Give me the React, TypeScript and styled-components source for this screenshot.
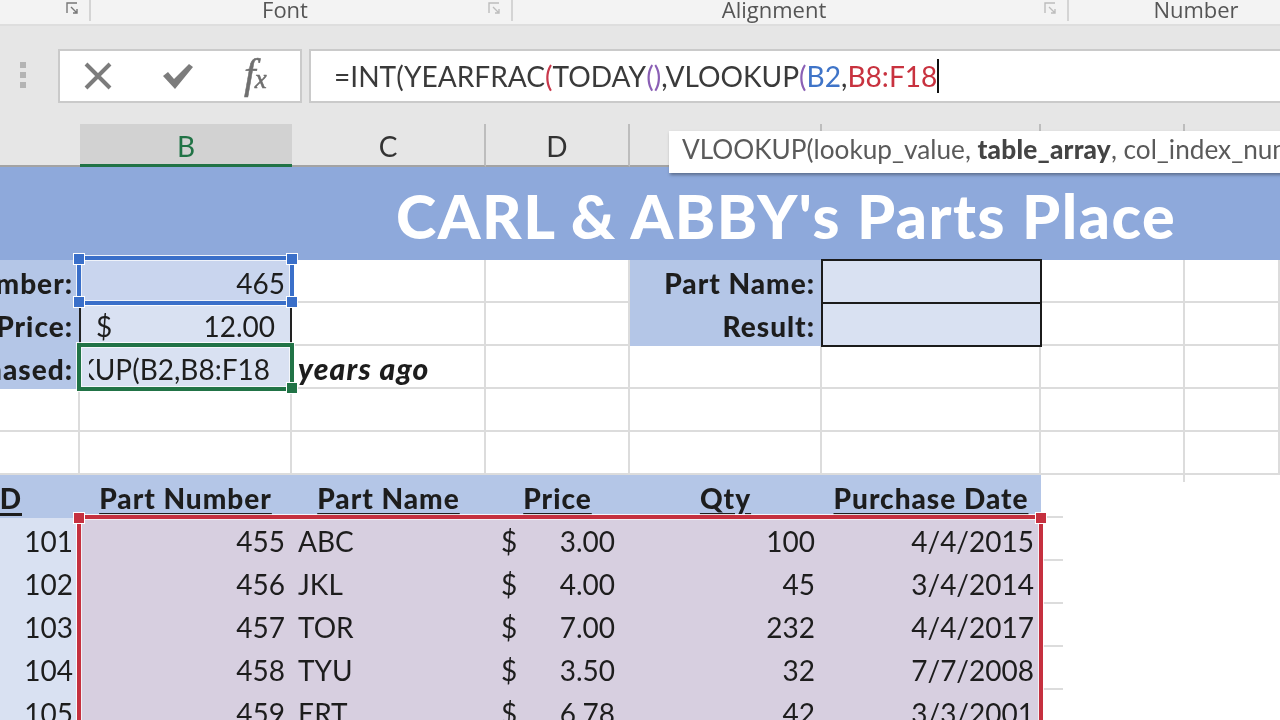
import React from "react";
import styled, { createGlobalStyle } from "styled-components";

const Global = createGlobalStyle`
  html, body { margin: 0; padding: 0; background: #fff; }
  body { font-family: Lato, "Liberation Sans", sans-serif; }
`;

const Page = styled.div`
  position: relative;
  width: 1280px;
  height: 720px;
  overflow: hidden;
  background: #fff;
  color: #1d1d1d;
  filter: blur(0.35px);
`;

/* ---------- ribbon ---------- */
const Ribbon = styled.div`
  display: grid;
  grid-template-columns: 91px 422px 556px 262px;
  height: 26px;
  box-sizing: border-box;
  background: #f3f3f3;
  border-bottom: 2px solid #dedede;
`;
const Group = styled.div<{ $edge?: boolean }>`
  display: flex;
  align-items: flex-start;
  height: 21px;
  border-right: ${(p) => (p.$edge ? "none" : "2px solid #d4d4d4")};
`;
const GroupLabel = styled.div`
  flex: 1;
  margin-top: -5px;
  padding-right: 8px;
  text-align: center;
  font-family: "Open Sans", sans-serif;
  font-size: 22px;
  line-height: 28px;
  color: #555;
`;
const Launcher = styled.svg<{ $dim?: boolean }>`
  width: 14px;
  height: 14px;
  margin: 1px 10px 0 0;
  flex: none;
  stroke: ${(p) => (p.$dim ? "#bdbdbd" : "#777")};
  fill: none;
`;

/* ---------- formula bar ---------- */
const FormulaBar = styled.div`
  display: flex;
  align-items: center;
  gap: 7px;
  height: 98px;
  box-sizing: border-box;
  padding: 2px 0 0 58px;
  background: #e6e6e6;
`;
const Grip = styled.div`
  position: absolute;
  left: 20px;
  top: 62px;
  display: flex;
  flex-direction: column;
  gap: 4px;
`;
const GripDot = styled.span`
  display: block;
  width: 6px;
  height: 6px;
  background: #b4b4b4;
`;
const ButtonBox = styled.div`
  display: flex;
  align-items: center;
  width: 244px;
  height: 54px;
  box-sizing: border-box;
  background: #fff;
  border: 2px solid #cacaca;
  padding-left: 23px;
  gap: 50px;
`;
const ActionIcon = styled.svg`
  flex: none;
  width: 30px;
  height: 30px;
`;
const FxText = styled.span`
  margin-left: 1px;
  font-family: "Liberation Serif", serif;
  font-style: italic;
  font-size: 42px;
  line-height: 40px;
  color: #6f6f6f;
  letter-spacing: -1px;
  -webkit-text-stroke: 0.5px #6f6f6f;
`;
const FxSmall = styled.span`
  font-size: 27px;
`;
const FormulaInput = styled.div`
  flex: 1;
  display: flex;
  align-items: center;
  height: 54px;
  box-sizing: border-box;
  background: #fff;
  border: 2px solid #cacaca;
  border-right: none;
  padding-left: 23px;
  font-size: 28.1px;
  color: #3a3a3a;
  white-space: nowrap;
`;
const Ref = styled.span<{ $c: string }>`
  color: ${(p) => p.$c};
`;
const Caret = styled.span`
  display: inline-block;
  width: 2px;
  height: 34px;
  background: #111;
`;

/* ---------- column headers ---------- */
const Columns = "80px 212px 194px 144px 192px 219px 144px 95px";
const HeaderRow = styled.div`
  display: grid;
  grid-template-columns: ${Columns};
  height: 43px;
  background: #e6e6e6;
`;
const ColHead = styled.div<{ $active?: boolean; $line?: boolean }>`
  display: flex;
  align-items: center;
  justify-content: center;
  box-sizing: border-box;
  padding-top: 3px;
  font-size: 28px;
  color: ${(p) => (p.$active ? "#217346" : "#333")};
  background: ${(p) => (p.$active ? "#d2d2d2" : "transparent")};
  border-bottom: ${(p) => (p.$active ? "3px solid #217346" : "2px solid #a3a3a3")};
  border-right: ${(p) => (p.$line ? "2px solid #bdbdbd" : "none")};
`;
const Tooltip = styled.div`
  position: absolute;
  left: 669px;
  top: 131px;
  width: 640px;
  height: 42px;
  box-sizing: border-box;
  padding: 0 0 6px 13px;
  display: flex;
  align-items: center;
  background: #fff;
  box-shadow: 1px 2px 3px rgba(0, 0, 0, 0.35);
  font-size: 26.2px;
  color: #5a5a5a;
  white-space: nowrap;
  overflow: hidden;
  z-index: 5;
`;
const TipBold = styled.b`
  color: #444;
  font-weight: 900;
  letter-spacing: 0.2px;
`;

/* ---------- sheet ---------- */
const Sheet = styled.div`
  position: relative;
  display: grid;
  grid-template-columns: ${Columns};
  grid-template-rows: 93px repeat(11, 43px);
`;
const Title = styled.div`
  grid-column: 1 / -1;
  display: flex;
  align-items: center;
  padding: 3px 0 0 396px;
  background: #8ea9db;
  color: #fff;
  font-weight: 900;
  font-size: 61px;
  letter-spacing: 1.5px;
  white-space: nowrap;
`;
type CellProps = {
  $fill?: string;
  $align?: "left" | "right" | "center" | "split";
  $bold?: boolean;
  $grid?: boolean;
  $box?: boolean;
  $tick?: boolean;
  $stub?: boolean;
  $sides?: boolean;
};
const justify = { left: "flex-start", right: "flex-end", center: "center", split: "space-between" };
const Cell = styled.div<CellProps>`
  display: flex;
  align-items: center;
  justify-content: ${(p) => justify[p.$align ?? "left"]};
  box-sizing: border-box;
  min-width: 0;
  overflow: hidden;
  white-space: nowrap;
  padding: ${(p) => (p.$align === "split" ? "2px 15px 0 15px" : "2px 7px 0 6px")};
  font-size: 28px;
  font-weight: ${(p) => (p.$bold ? 900 : 400)};
  letter-spacing: ${(p) => (p.$bold ? "1px" : "0")};
  color: #1d1d1d;
  background-color: ${(p) => p.$fill ?? "transparent"};
  ${(p) => p.$grid && "border-right: 2px solid #dcdcdc; border-bottom: 2px solid #dcdcdc;"}
  ${(p) => p.$box && "outline: 2px solid #1b1b1b; outline-offset: -1px; position: relative;"}
  ${(p) => p.$sides && "margin-left: -1px; border-left: 2px solid #222; border-right: 2px solid #222;"}
  ${(p) =>
    p.$tick &&
    "background-image: linear-gradient(#dcdcdc, #dcdcdc); background-repeat: no-repeat; background-size: 22px 2px; background-position: left bottom;"}
  ${(p) =>
    p.$stub &&
    "background-image: linear-gradient(#dcdcdc, #dcdcdc), linear-gradient(#dcdcdc, #dcdcdc); background-repeat: no-repeat; background-size: 22px 2px, 2px 7px; background-position: left bottom, right top;"}
`;
const HeadCell = styled(Cell)`
  font-weight: 900;
  letter-spacing: 1px;
  text-decoration: underline;
  text-decoration-thickness: 3px;
  text-underline-offset: 4px;
  background-color: #b4c6e7;
`;
const IdLabel = styled.span`
  margin-right: 51px;
`;
const EditClip = styled.div`
  display: flex;
  justify-content: flex-end;
  width: 100%;
  margin: 0 15px 0 3px;
  overflow: hidden;
`;
const YearsAgo = styled.span`
  font-weight: 900;
  font-style: italic;
  font-size: 30px;
  letter-spacing: 1.2px;
`;

/* overlays */
const Range = styled.div<{ $c: string; $l: number; $t: number; $w: number; $h: number; $open?: boolean }>`
  position: absolute;
  left: ${(p) => p.$l}px;
  top: ${(p) => p.$t}px;
  width: ${(p) => p.$w}px;
  height: ${(p) => p.$h}px;
  box-sizing: border-box;
  border: 4px solid ${(p) => p.$c};
  ${(p) => p.$open && "border-bottom: none;"}
  box-shadow: 0 0 0 1px rgba(255, 255, 255, 0.85), inset 0 0 0 1px rgba(255, 255, 255, 0.7);
  pointer-events: none;
  z-index: 3;
`;
const Handle = styled.span<{ $c: string; $x: "l" | "r"; $y: "t" | "b" }>`
  position: absolute;
  width: 12px;
  height: 12px;
  box-sizing: border-box;
  background: ${(p) => p.$c};
  border: 1px solid #fff;
  ${(p) => (p.$x === "l" ? "left: -8px;" : "right: -8px;")}
  ${(p) => (p.$y === "t" ? "top: -7px;" : "bottom: -7px;")}
`;

const rows = [
  ["101", "455", "ABC", "3.00", "100", "4/4/2015"],
  ["102", "456", "JKL", "4.00", "45", "3/4/2014"],
  ["103", "457", "TOR", "7.00", "232", "4/4/2017"],
  ["104", "458", "TYU", "3.50", "32", "7/7/2008"],
  ["105", "459", "ERT", "6.78", "42", "3/3/2001"],
];

const LABEL = "#b4c6e7";
const LIGHT = "#d9e1f2";
const PICK = "#d7cfe0";

const LauncherIcon = ({ dim }: { dim?: boolean }) => (
  <Launcher $dim={dim} viewBox="0 0 14 14" strokeWidth="1.4">
    <path d="M12 2H2v10" />
    <path d="M6 6l6 6M12 8v4H8" />
  </Launcher>
);

export default function App() {
  return (
    <Page>
      <Global />
      <Ribbon>
        <Group>
          <GroupLabel />
          <LauncherIcon />
        </Group>
        <Group>
          <GroupLabel>Font</GroupLabel>
          <LauncherIcon dim />
        </Group>
        <Group>
          <GroupLabel>Alignment</GroupLabel>
          <LauncherIcon dim />
        </Group>
        <Group $edge>
          <GroupLabel>Number</GroupLabel>
        </Group>
      </Ribbon>

      <FormulaBar>
        <Grip>
          <GripDot />
          <GripDot />
          <GripDot />
        </Grip>
        <ButtonBox>
          <ActionIcon viewBox="0 0 30 30">
            <path d="M3 3l24 24M27 3L3 27" stroke="#7c7c7c" strokeWidth="4" fill="none" />
          </ActionIcon>
          <ActionIcon viewBox="0 0 30 30">
            <path d="M0 15l5-4 6 7L26 3l4 3-18 22z" fill="#7c7c7c" />
          </ActionIcon>
          <FxText>
            f<FxSmall>x</FxSmall>
          </FxText>
        </ButtonBox>
        <FormulaInput>
          =INT(YEARFRAC<Ref $c="#c8374a">(</Ref>TODAY<Ref $c="#8a5fb5">()</Ref>,VLOOKUP
          <Ref $c="#8a5fb5">(</Ref>
          <Ref $c="#3f74c8">B2</Ref>,<Ref $c="#c8323f">B8:F18</Ref>
          <Caret />
        </FormulaInput>
      </FormulaBar>

      <HeaderRow>
        <ColHead />
        <ColHead $active>B</ColHead>
        <ColHead $line>C</ColHead>
        <ColHead $line>D</ColHead>
        <ColHead $line />
        <ColHead $line />
        <ColHead $line />
        <ColHead />
      </HeaderRow>
      <Tooltip>
        VLOOKUP(lookup_value,&nbsp;<TipBold>table_array</TipBold>, col_index_num, [range_lookup])
      </Tooltip>

      <Sheet>
        <Title>CARL &amp; ABBY's Parts Place</Title>

        <Cell $fill={LABEL} $align="right" $bold>Part Number:</Cell>
        <Cell $fill="#c9d5ee" $align="right">465</Cell>
        <Cell $grid />
        <Cell $grid />
        <Cell $fill={LABEL} $align="right" $bold>Part Name:</Cell>
        <Cell $fill={LIGHT} $box />
        <Cell $grid />
        <Cell $grid />

        <Cell $fill={LABEL} $align="right" $bold>Unit Price:</Cell>
        <Cell $fill={LIGHT} $align="split" $sides><span>$</span><span>12.00</span></Cell>
        <Cell $grid />
        <Cell $grid />
        <Cell $fill={LABEL} $align="right" $bold>Result:</Cell>
        <Cell $fill={LIGHT} $box />
        <Cell $grid />
        <Cell $grid />

        <Cell $fill={LABEL} $align="right" $bold>Date Purchased:</Cell>
        <Cell $fill={LIGHT} $align="right">
          <EditClip>=INT(YEARFRAC(TODAY(),VLOOKUP(B2,B8:F18</EditClip>
        </Cell>
        <Cell $grid><YearsAgo>years ago</YearsAgo></Cell>
        <Cell $grid />
        <Cell $grid />
        <Cell $grid />
        <Cell $grid />
        <Cell $grid />

        {[0, 1].map((r) => (
          <React.Fragment key={r}>
            {Array.from({ length: 8 }, (_, i) => (
              <Cell key={i} $grid />
            ))}
          </React.Fragment>
        ))}

        <HeadCell $align="right"><IdLabel>ID</IdLabel></HeadCell>
        <HeadCell $align="center">Part Number</HeadCell>
        <HeadCell $align="center">Part Name</HeadCell>
        <HeadCell $align="center">Price</HeadCell>
        <HeadCell $align="center">Qty</HeadCell>
        <HeadCell $align="center">Purchase Date</HeadCell>
        <Cell $stub />
        <Cell />

        {rows.map((r) => (
          <React.Fragment key={r[0]}>
            <Cell $fill={LIGHT} $align="right">{r[0]}</Cell>
            <Cell $fill={PICK} $align="right">{r[1]}</Cell>
            <Cell $fill={PICK}>{r[2]}</Cell>
            <Cell $fill={PICK} $align="split"><span>$</span><span>{r[3]}</span></Cell>
            <Cell $fill={PICK} $align="right">{r[4]}</Cell>
            <Cell $fill={PICK} $align="right">{r[5]}</Cell>
            <Cell $tick />
            <Cell />
          </React.Fragment>
        ))}

        <Range $c="#3a6fc9" $l={77} $t={89} $w={217} $h={49}>
          <Handle $c="#3a6fc9" $x="l" $y="t" />
          <Handle $c="#3a6fc9" $x="r" $y="t" />
          <Handle $c="#3a6fc9" $x="l" $y="b" />
          <Handle $c="#3a6fc9" $x="r" $y="b" />
        </Range>
        <Range $c="#217346" $l={77} $t={176} $w={217} $h={48}>
          <Handle $c="#217346" $x="r" $y="b" />
        </Range>
        <Range $c="#c5303f" $l={77} $t={348} $w={966} $h={260} $open>
          <Handle $c="#c5303f" $x="l" $y="t" />
          <Handle $c="#c5303f" $x="r" $y="t" />
        </Range>
      </Sheet>
    </Page>
  );
}
